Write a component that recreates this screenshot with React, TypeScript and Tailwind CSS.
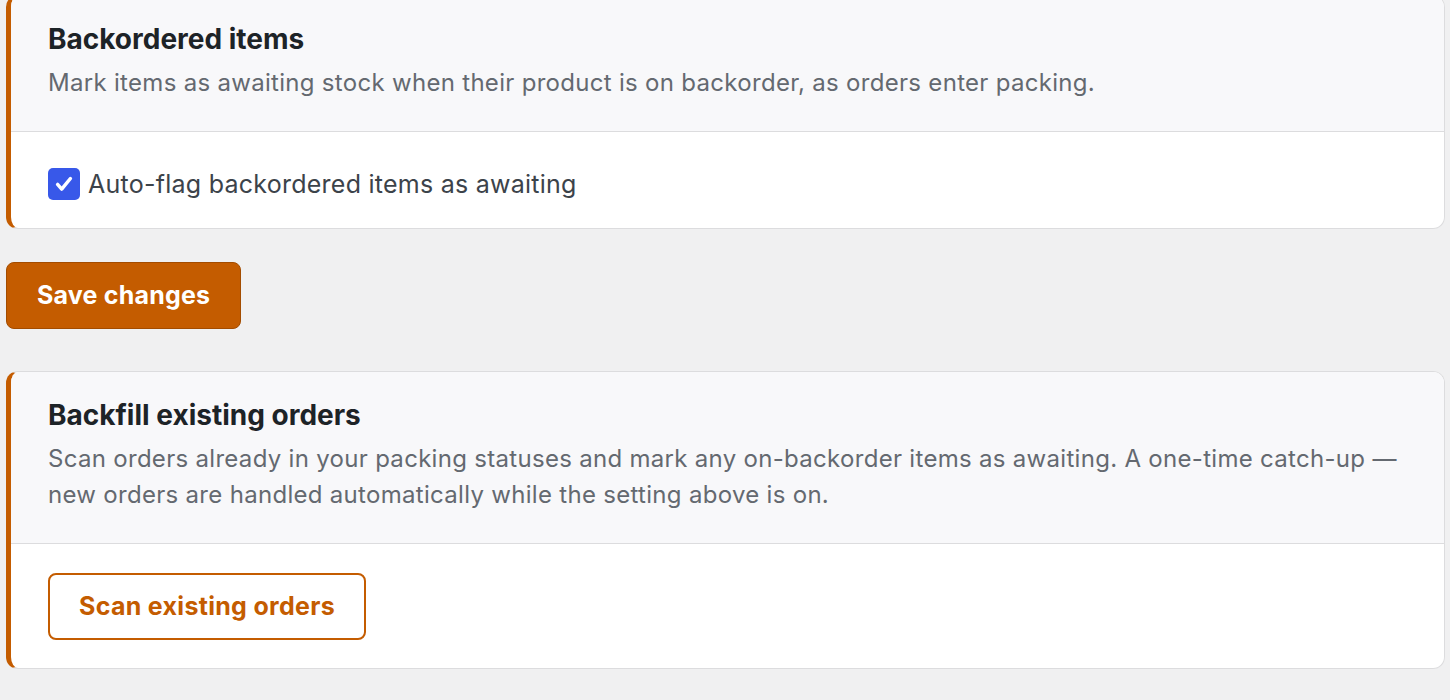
import React, { useState } from "react";

const font = { fontFamily: 'Inter, "Noto Sans", "Liberation Sans", sans-serif' };

const Card = ({ title, children, body }: { title: string; children: React.ReactNode; body: React.ReactNode }) => (
  <div className="rounded-xl border border-[#dcdcde] border-l-[5px] border-l-[#c45c00] bg-white overflow-hidden">
    <div className="bg-[#f8f8fa] pl-[37px] pr-[44px] pt-[25px] pb-[30px] border-b border-[#dcdcde]">
      <h3 className="text-[28px] leading-[36px] font-bold text-[#1d2327]">{title}</h3>
      <div className="mt-[8px] text-[24px] leading-[36px] tracking-[0.3px] text-[#646970]">{children}</div>
    </div>
    {body}
  </div>
);

export default function App() {
  const [flag, setFlag] = useState(true);

  return (
    <div className="min-h-[700px] bg-[#f0f0f1] pl-[6px] pr-[5px] overflow-hidden" style={font}>
      <div className="-mt-[5px]">
        <Card
          title="Backordered items"
          body={
            <div className="px-[37px] pt-[35px] pb-[27px]">
              <label className="flex items-center gap-2 text-[25px] leading-[34px] tracking-[0.25px] text-[#3c434a] cursor-pointer">
                <button
                  onClick={() => setFlag(!flag)}
                  className={
                    flag
                      ? "w-8 h-8 rounded-[5px] bg-[#3858e9] flex items-center justify-center"
                      : "w-8 h-8 rounded-[5px] border-2 border-[#8c8f94] bg-white"
                  }
                >
                  {flag && (
                    <svg width="22" height="22" viewBox="0 0 24 24" fill="none" stroke="white" strokeWidth="3.8" strokeLinecap="round" strokeLinejoin="round">
                      <path d="M5 12.5l4.5 5L19 6" />
                    </svg>
                  )}
                </button>
                Auto-flag backordered items as awaiting
              </label>
            </div>
          }
        >
          Mark items as awaiting stock when their product is on backorder, as orders enter packing.
        </Card>
      </div>

      <button className="mt-[33px] h-[67px] px-[30px] rounded-lg border border-[#a34c00] bg-[#c45c00] text-white text-[25px] tracking-[0.2px] font-bold">
        Save changes
      </button>

      <div className="mt-[42px]">
        <Card
          title="Backfill existing orders"
          body={
            <div className="px-[37px] pt-[29px] pb-[28px]">
              <button className="h-[67px] px-[29px] rounded-lg border-2 border-[#c45c00] bg-white text-[#c45c00] text-[25px] tracking-[0.3px] font-bold">
                Scan existing orders
              </button>
            </div>
          }
        >
          Scan orders already in your packing statuses and mark any on-backorder items as awaiting. A one-time catch-up —
          new orders are handled automatically while the setting above is on.
        </Card>
      </div>
    </div>
  );
}
